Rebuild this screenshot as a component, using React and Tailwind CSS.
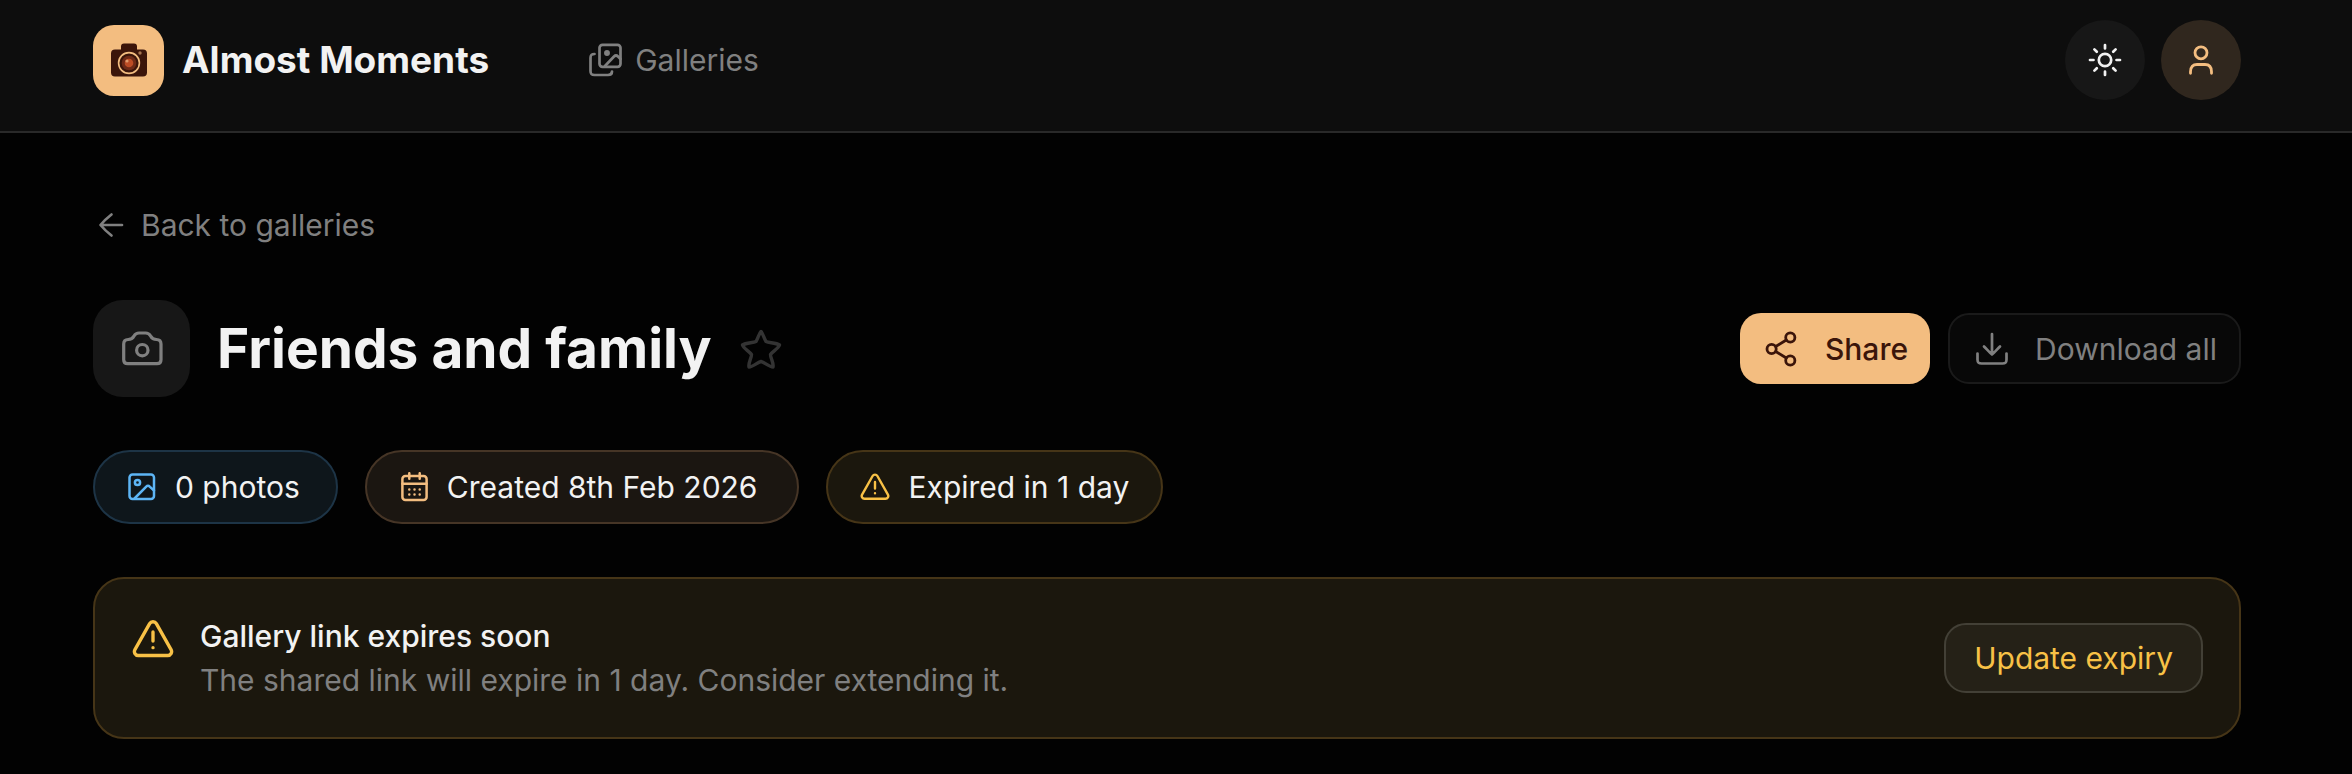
import React from "react";

export default function App() {
  return (
    <div className="min-h-screen bg-[#020202] font-[Inter,sans-serif] text-[30px] leading-[44px] text-[#f2f2f2]">

      {/* HEADER */}
      <header className="flex items-center justify-between border-b-2 border-[#292929] bg-[#0d0d0d] pt-5 pr-[111px] pb-[31px] pl-[93px]">
        <div className="flex items-center">
          <a href="#home" className="flex items-center gap-[18px]">
            <span className="flex size-[71px] items-center justify-center rounded-[21px] bg-[#f3bd80]">
              <LogoMark />
            </span>
            <span className="text-[37px] font-bold">Almost Moments</span>
          </a>

          <nav className="ml-[98px]">
            <a href="#galleries" className="flex items-center gap-3 text-[#808080]">
              <GalleriesIcon />
              Galleries
            </a>
          </nav>
        </div>

        <div className="flex items-center gap-4">
          <button
            type="button"
            aria-label="Toggle theme"
            className="flex size-20 items-center justify-center rounded-full bg-[#171717]"
          >
            <SunIcon />
          </button>
          <button
            type="button"
            aria-label="Account"
            className="flex size-20 items-center justify-center rounded-full bg-[#30271e] text-[#f3bd80]"
          >
            <UserIcon />
          </button>
        </div>
      </header>

      <main className="pt-[70px] pr-[111px] pb-[35px] pl-[93px]">
        <a href="#galleries" className="inline-flex items-center gap-3 text-[#808080]">
          <ArrowIcon />
          Back to galleries
        </a>

        {/* TITLE AND ACTIONS */}
        <div className="mt-[46px] flex items-center justify-between">
          <div className="flex items-center">
            <div className="flex size-[97px] items-center justify-center rounded-[30px] bg-[#171717] text-[#808080]">
              <CameraIcon />
            </div>
            <h1 className="ml-[27px] pb-0.5 text-[55px] font-bold">Friends and family</h1>
            <button type="button" aria-label="Add to favourites" className="ml-7 text-[#333333]">
              <StarIcon />
            </button>
          </div>

          <div className="flex items-center gap-[18px]">
            <button
              type="button"
              className="flex h-[71px] items-center gap-[25px] rounded-[21px] bg-[#f3bd80] pr-[22px] pl-6 font-medium text-[#3b150a]"
            >
              <ShareIcon />
              Share
            </button>
            <button
              type="button"
              className="flex h-[71px] items-center gap-[25px] rounded-[21px] border-2 border-[#1a1a1a] bg-[#080808] pr-[22px] pl-6 text-[#808080]"
            >
              <DownloadIcon />
              Download all
            </button>
          </div>
        </div>

        {/* GALLERY META */}
        <ul className="mt-[53px] flex gap-[27px]">
          <Pill className="border-[#1d3446] bg-[#0e161b] pr-9" iconClass="text-[#5db5f5]" icon={<ImageIcon />}>
            0 photos
          </Pill>
          <Pill className="border-[#463526] bg-[#1b1611] pr-10" iconClass="text-[#f3bd80]" icon={<CalendarIcon />}>
            Created 8th Feb 2026
          </Pill>
          <Pill className="border-[#463517] bg-[#1b170d] pr-8" iconClass="text-[#f8c146]" icon={<WarningIcon className="size-[30px]" />}>
            Expired in 1 day
          </Pill>
        </ul>

        {/* EXPIRY WARNING */}
        <section className="mt-[53px] flex items-center justify-between rounded-[31px] border-2 border-[#463517] bg-[#1b170d] py-[35px] pr-9 pl-[37px]">
          <div className="flex items-start gap-[26px]">
            <WarningIcon className="mt-1 size-[42px] text-[#f8c146]" />
            <div>
              <h2 className="font-medium">Gallery link expires soon</h2>
              <p className="text-[#808080]">The shared link will expire in 1 day. Consider extending it.</p>
            </div>
          </div>
          <button
            type="button"
            className="h-[70px] rounded-[22px] border-2 border-[#434036] bg-[#252117] px-7 text-[#f8c146]"
          >
            Update expiry
          </button>
        </section>
      </main>
    </div>
  );
}

function Pill({ className, iconClass, icon, children }) {
  return (
    <li className={`flex h-[74px] items-center gap-[18px] rounded-full border-2 pl-8 ${className}`}>
      <span className={iconClass}>{icon}</span>
      {children}
    </li>
  );
}

/* ICONS */
function Icon({ box = 36, width = 2.7, className = "size-9", children }) {
  return (
    <svg
      viewBox={`0 0 ${box} ${box}`}
      className={`shrink-0 ${className}`}
      fill="none"
      stroke="currentColor"
      strokeWidth={width}
      strokeLinecap="round"
      strokeLinejoin="round"
      aria-hidden="true"
    >
      {children}
    </svg>
  );
}

function LogoMark() {
  return (
    <svg viewBox="0 0 36 34" className="h-[34px] w-9" aria-hidden="true">
      <path
        d="M4 6.5h6V3.500a3 3 0 0 1 3-3h10a3 3 0 0 1 3 3v3h6a4 4 0 0 1 4 4v19a4 4 0 0 1-4 4H4a4 4 0 0 1-4-4v-19a4 4 0 0 1 4-4Z"
        fill="#3b150a"
      />
      <circle cx="18" cy="20" r="10.4" fill="#3b150a" stroke="#f3bd80" strokeWidth="1.6" />
      <circle cx="18" cy="20" r="7.3" fill="#6e2a17" />
      <circle cx="18" cy="20" r="4.3" fill="#bd4c25" />
      <circle cx="16" cy="18" r="1.6" fill="#e09a6c" />
      <circle cx="29" cy="10" r="1.7" fill="#a67450" />
    </svg>
  );
}

function GalleriesIcon() {
  return (
    <Icon>
      <rect x="12.5" y="2.8" width="21" height="22" rx="3" />
      <path d="M7.5 12c-3 0-4 1-4 4v13c0 3 1 4 4 4h13.500c3 0 4-1 4-3.500M18 24l9-9.500q2-2 4 0l2.500 2.500" />
      <circle cx="20" cy="11" r="1.6" fill="currentColor" />
    </Icon>
  );
}

function SunIcon() {
  return (
    <Icon>
      <circle cx="18" cy="18" r="6.2" />
      <path d="M18 3v3.500M18 29.500V33M3 18h3.500M29.500 18H33M7.400 7.400l2.400 2.400M26.200 26.200l2.400 2.400M7.400 28.600l2.400-2.400M26.200 9.800l2.400-2.400" />
    </Icon>
  );
}

function UserIcon() {
  return (
    <Icon width={2.8}>
      <circle cx="18" cy="10.8" r="6" />
      <path d="M7.500 31.300v-1.500c0-5 2.500-7.300 6.500-7.300h8c4 0 6.500 2.300 6.500 7.300v1.500" />
    </Icon>
  );
}

function ArrowIcon() {
  return (
    <Icon>
      <path d="M29 18H8M18.500 7.500C14 11 10 15 7.500 18c2.500 3 6.500 7 11 10.500" />
    </Icon>
  );
}

function CameraIcon() {
  return (
    <Icon box={42} width={3.2} className="size-[42px]">
      <path d="M2.700 16c0-3.500 1.500-4.500 4.500-4.500 3.500 0 4.500-1 5.800-3.500C14.200 6 15.500 5 18 5h6.600c2.500 0 3.800 1 5 3 1.300 2.500 2.300 3.500 5.800 3.500 3 0 4.600 1 4.600 4.500v15.700c0 3-1.300 4-4 4H6.700c-2.700 0-4-1-4-4Z" />
      <circle cx="21.300" cy="22.200" r="5.700" />
    </Icon>
  );
}

function StarIcon() {
  return (
    <Icon box={42} width={3.4} className="size-[42px]">
      <path d="M21 3.500c-2 2-3 7-5 10-3 1.500-10 1-13.500 3.500 1.500 4 6.500 6 9 9.500 0 4-3.500 8.500-2.500 12.500 4 0 8-4.500 12-5.500 4 1 8 5.500 12 5.500 1-4-2.500-8.500-2.500-12.500 2.500-3.500 7.500-5.500 9-9.500-3.500-2.500-10.500-2-13.500-3.500-2-3-3-8-5-10Z" />
    </Icon>
  );
}

function ShareIcon() {
  return (
    <Icon width={2.8}>
      <circle cx="7.600" cy="18" r="4.600" />
      <circle cx="26.300" cy="6.500" r="4.600" />
      <circle cx="26.300" cy="29.500" r="4.600" />
      <path d="m11.700 15.500 10.600-6.500M11.700 20.500l10.600 6.500" />
    </Icon>
  );
}

function DownloadIcon() {
  return (
    <Icon width={2.7}>
      <path d="M18 3v20.500M10 15.500c3 3 6 6.500 8 8 2-1.500 5-5 8-8M3.500 22.500v6c0 3 1 4 4 4h21c3 0 4-1 4-4v-6" />
    </Icon>
  );
}

function ImageIcon() {
  return (
    <Icon box={30} width={2.5} className="size-[30px]">
      <rect x="2.500" y="2.500" width="24.500" height="24.500" rx="3" />
      <circle cx="10.500" cy="10.500" r="2.600" />
      <path d="M7.500 26.500 19 14.800q2-2 4 0l4 3.700" />
    </Icon>
  );
}

function CalendarIcon() {
  return (
    <Icon box={30} width={2.5} className="size-[30px]">
      <rect x="3.400" y="4.100" width="24.200" height="23.800" rx="3" />
      <path d="M10.300 1.200v5.500M20.700 1.200v5.500M3.400 11.800h24.200M10.300 17.500h.01M15.500 17.500h.01M20.700 17.500h.01M10.300 22.500h.01M15.500 22.500h.01M20.700 22.500h.01" />
    </Icon>
  );
}

function WarningIcon({ className }) {
  return (
    <Icon box={30} width={2.4} className={className}>
      <path d="M12.600 4a2.800 2.800 0 0 1 4.800 0L27.900 22.600a2.800 2.800 0 0 1-2.400 4.200h-21a2.800 2.800 0 0 1-2.400-4.200ZM15 10v6.500M15 21.200h.01" />
    </Icon>
  );
}
